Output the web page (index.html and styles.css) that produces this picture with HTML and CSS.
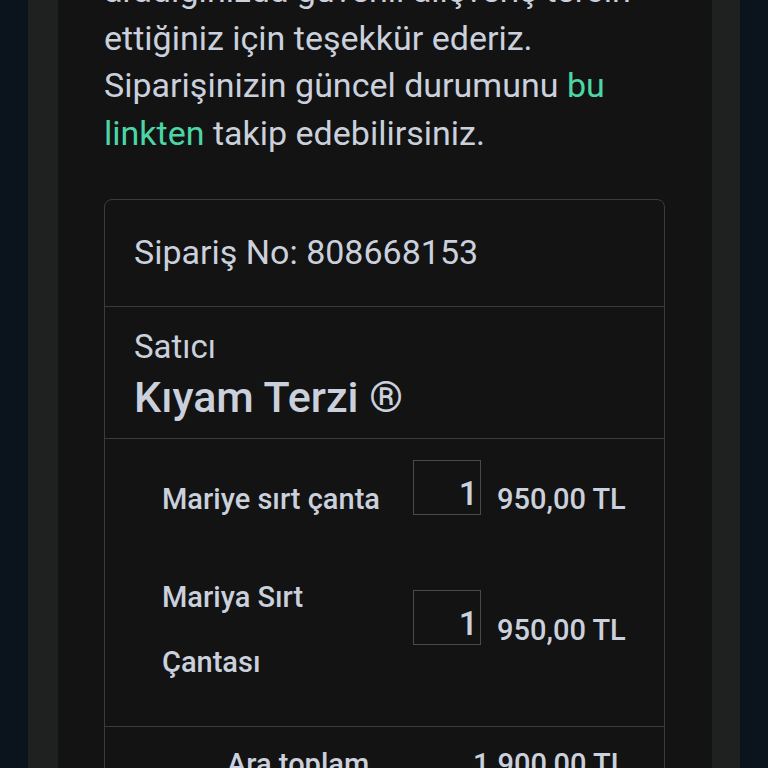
FILE: index.html
```html
<!DOCTYPE html>
<html lang="tr">
<head>
    <meta charset="UTF-8">
    <meta name="viewport" content="width=device-width, initial-scale=1.0">
    <title>Sipariş Onayı</title>
    <link rel="stylesheet" href="styles.css">
</head>
<body>
    <div class="shell">
        <div class="panel">
            <p class="intro">
                aradığınızda güvenli alışveriş tercih
                ettiğiniz için teşekkür ederiz.
                Siparişinizin güncel durumunu <a href="#">bu linkten</a> takip edebilirsiniz.
            </p>

            <div class="order-card">
                <div class="order-head">Sipariş No: 808668153</div>

                <div class="seller">
                    <div class="seller-label">Satıcı</div>
                    <div class="seller-name">Kıyam Terzi ®</div>
                </div>

                <div class="items">
                    <div class="item-name">Mariye sırt çanta</div>
                    <div class="qty">1</div>
                    <div class="price">950,00 TL</div>

                    <div class="item-name">Mariya Sırt Çantası</div>
                    <div class="qty">1</div>
                    <div class="price">950,00 TL</div>
                </div>

                <div class="totals">
                    <div class="total-label">Ara toplam</div>
                    <div class="total-value">1.900,00 TL</div>
                </div>
            </div>
        </div>
    </div>
</body>
</html>
```

FILE: styles.css
```css
body {
    margin: 0;
    height: 768px;
    overflow: hidden;
    background: #0b131c;
    font-family: Roboto, 'Noto Sans', sans-serif;
    color: #cad0dc;
}

.shell {
    margin: 0 28px;
    padding: 0 28px 0 30px;
    background: #1f2020;
    min-height: 768px;
}

.panel {
    background: #131313;
    padding: 0 47px 0 46px;
    min-height: 768px;
}

.intro {
    margin: -33px 0 0;
    font-size: 34px;
    line-height: 47.5px;
}

.intro a {
    color: #4cd6a6;
    text-decoration: none;
}

.order-card {
    margin-top: 42px;
    border: 1px solid #3c3c3c;
    border-radius: 8px;
}

.order-head {
    padding: 29px 29px 30px;
    font-size: 34px;
    line-height: 46.5px;
    border-bottom: 1px solid #3c3c3c;
}

.seller {
    padding: 18px 29px 13px;
    border-bottom: 1px solid #3c3c3c;
}

.seller-label {
    font-size: 33px;
    line-height: 44px;
}

.seller-name {
    font-size: 43px;
    font-weight: 500;
    line-height: 56px;
}

.items {
    display: grid;
    grid-template-columns: 251px 68px auto;
    align-items: center;
    row-gap: 26px;
    padding: 21px 0 31px 57px;
    border-bottom: 1px solid #3c3c3c;
    font-size: 29px;
    font-weight: 500;
}

.item-name {
    line-height: 65px;
    padding-right: 22px;
}

.qty {
    box-sizing: border-box;
    height: 55px;
    margin-bottom: 24px;
    padding: 11px 2px 0 0;
    border: 1px solid #4a4a4a;
    text-align: right;
    font-size: 34px;
    line-height: 42px;
}

.price {
    margin-left: 16px;
}

.totals {
    display: grid;
    grid-template-columns: 246px auto;
    padding: 20px 0 0 122px;
    font-size: 29px;
    font-weight: 500;
    line-height: 34px;
}
```
